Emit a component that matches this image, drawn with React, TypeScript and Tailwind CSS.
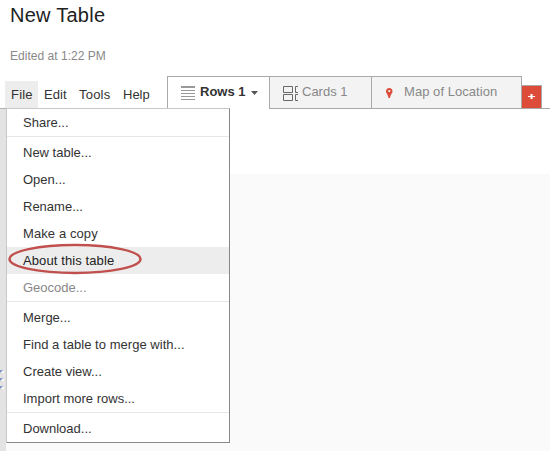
import React from "react";

type Item = { label: string; spacing: string; disabled?: boolean; active?: boolean };

const groups: Item[][] = [
  [{ label: "Share...", spacing: "tracking-normal" }],
  [
    { label: "New table...", spacing: "tracking-normal" },
    { label: "Open...", spacing: "tracking-normal" },
    { label: "Rename...", spacing: "tracking-normal" },
    { label: "Make a copy", spacing: "tracking-[0.1px]" },
    { label: "About this table", spacing: "tracking-[0.1px]", active: true },
    { label: "Geocode...", spacing: "tracking-normal", disabled: true },
  ],
  [
    { label: "Merge...", spacing: "tracking-normal" },
    { label: "Find a table to merge with...", spacing: "tracking-[0.04px]" },
    { label: "Create view...", spacing: "tracking-normal" },
    { label: "Import more rows...", spacing: "tracking-normal" },
  ],
  [{ label: "Download...", spacing: "tracking-normal" }],
];

function RowsIcon() {
  return (
    <svg width="14" height="14" viewBox="0 0 14 14" className="mt-[9px] ml-[13px] shrink-0" fill="#999">
      <rect width="14" height="2" />
      <rect y="4" width="14" height="1" />
      <rect y="7" width="14" height="1" />
      <rect y="10" width="14" height="1" />
      <rect y="13" width="14" height="1" />
    </svg>
  );
}

function CardsIcon() {
  return (
    <svg width="15" height="15" viewBox="0 0 15 15" className="mt-[9px] ml-[13px] shrink-0" fill="none" stroke="#686868">
      <path d="M.5.5h9v6h-9zM.5 8.500h9v6h-9zM15 .5h-2.500v6H15M15 8.500h-2.500v6H15" />
    </svg>
  );
}

function PinIcon() {
  return (
    <svg width="7" height="10" viewBox="0 0 7 10" className="mt-[11px] ml-[14px] shrink-0">
      <path fillRule="evenodd" fill="#dd4b39" d="M3.250 0C1.300 0 0 1.300 0 3.200c0 2.100 2 3 2.500 6.800h1.500c.5-3.800 2.500-4.700 2.500-6.800C6.500 1.300 5.200 0 3.250 0zM3.250 2a1.100 1.100 0 1 1 0 2.200 1.100 1.100 0 0 1 0-2.200z" />
    </svg>
  );
}

function MenuBar() {
  return (
    <nav className="mt-[5px] flex h-[27px] text-[13px] leading-[27px] text-[#333]">
      <span className="ml-[5px] w-[33px] bg-[#ededed] pl-1.5 tracking-[0.2px]">File</span>
      <span className="w-[35px] pl-1.5 tracking-[0.1px]">Edit</span>
      <span className="w-[44px] pl-1.5 tracking-[0.2px]">Tools</span>
      <span className="w-[50px] pl-1.5">Help</span>
    </nav>
  );
}

function FileMenu() {
  return (
    <div className="-mt-px h-[335px] w-[224px] shrink-0 border border-t-[#c8c8c8] border-r-[#888] border-b-[#888] border-l-[#c8c8c8] bg-white text-[13px] leading-[27px] text-[#333]">
      {groups.map((group, i) => (
        <React.Fragment key={i}>
          {i > 0 && <hr className="mb-0.5 h-px border-0 bg-[#e6e6e6]" />}
          {group.map((item) => (
            <div
              key={item.label}
              className={`relative h-[27px] pl-4 whitespace-nowrap ${item.spacing} ${item.active ? "bg-[#ededed] text-[#222]" : ""} ${item.disabled ? "text-[#888]" : ""}`}
            >
              {item.label}
              {item.active && (
                <svg width="136" height="34" className="absolute top-[-5px] left-0" fill="none" stroke="#c0504d" strokeWidth="2.500">
                  <ellipse cx="68" cy="17" rx="65.500" ry="14" />
                </svg>
              )}
            </div>
          ))}
        </React.Fragment>
      ))}
    </div>
  );
}

export default function App() {
  return (
    <div className="flex h-[451px] w-[550px] flex-col overflow-hidden bg-white font-['Liberation_Sans',Arial,sans-serif]">
      <header className="h-[76px] pl-2.5">
        <h1 className="pt-[3px] text-[20px] leading-6 tracking-[0.25px] text-[#222]">New Table</h1>
        <p className="mt-[21px] text-[12px] leading-4 tracking-[0.03px] text-[#888]">Edited at 1:22 PM</p>
      </header>
      <div className="flex h-[33px] shrink-0">
        <div className="w-[167px] border-b border-[#b0b0b0]">
          <MenuBar />
        </div>
        <div className="flex w-[103px] border-x border-t border-[#aaa] text-[13px] font-bold text-[#333]">
          <RowsIcon />
          <span className="ml-[5px] pt-[7px] leading-4 whitespace-nowrap">Rows 1</span>
          <svg width="7" height="4" className="mt-[14px] ml-[5px] shrink-0" fill="#555">
            <path d="M0 0h7L3.500 4z" />
          </svg>
        </div>
        <div className="flex w-[102px] border-y border-r border-[#aaa] bg-[#f3f3f3] text-[13px] text-[#888]">
          <CardsIcon />
          <span className="ml-1 pt-[7px] leading-4 whitespace-nowrap">Cards 1</span>
        </div>
        <div className="flex w-[150px] border-y border-r border-[#aaa] bg-[#f3f3f3] text-[13px] tracking-[0.05px] text-[#888]">
          <PinIcon />
          <span className="ml-[11px] pt-[7px] leading-4 whitespace-nowrap">Map of Location</span>
        </div>
        <div className="flex flex-1 items-end border-b border-[#aaa]">
          <div className="flex h-[23px] w-5 items-start justify-center border-t border-r border-[#aaa] bg-[#dd4b39] pt-2">
            <svg width="7" height="5" fill="#fff">
              <path d="M0 2h7v1H0zM2.500 0h2v5h-2z" />
            </svg>
          </div>
        </div>
      </div>
      <main className="flex min-h-0 flex-1">
        <aside className="w-[6px] shrink-0 bg-[#e3e3e3] pt-[261px]">
          <svg width="4" height="19" fill="#8298c4">
            <path d="M0 0h3L0 3zM0 8h3L0 11zM0 16h3L0 19z" />
            <path fill="#fff" d="M3 1h1v2H1zM3 9h1v2H1zM3 17h1v2H1z" />
          </svg>
        </aside>
        <div className="flex flex-1 bg-[linear-gradient(#fff_65px,#fafafa_65px)]">
          <FileMenu />
        </div>
      </main>
    </div>
  );
}
